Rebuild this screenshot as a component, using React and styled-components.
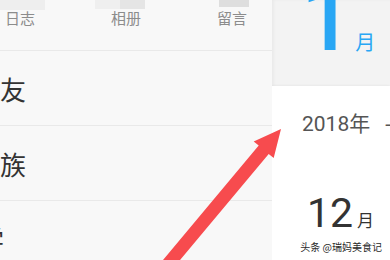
import React from 'react';
import styled, { createGlobalStyle } from 'styled-components';

const GlobalStyle = createGlobalStyle`
  html,
  body {
    margin: 0;
    padding: 0;
    background: #f8f8f8;
  }

  * {
    box-sizing: border-box;
  }
`;

const Screen = styled.div`
  position: relative;
  width: 390px;
  height: 260px;
  overflow: hidden;
  display: flex;
  background: #f8f8f8;
  font-family: Roboto, 'Noto Sans CJK SC', sans-serif;
`;

const LeftPane = styled.div`
  width: 272px;
  flex-shrink: 0;
  display: flex;
  flex-direction: column;
  overflow: hidden;
`;

const Nav = styled.div`
  display: grid;
  grid-template-columns: repeat(3, 106px);
  flex-shrink: 0;
  margin-left: -33px;
  height: 51px;
  border-bottom: 1px solid #e9e9e9;
`;

const NavItem = styled.div`
  display: flex;
  flex-direction: column;
  align-items: center;
`;

const Tile = styled.div`
  width: ${(props) => props.$w}px;
  height: 40px;
  margin-top: ${(props) => props.$visible - 40}px;
  margin-bottom: ${(props) => 10 - props.$visible}px;
  transform: translateX(${(props) => props.$shift}px);
  background: ${(props) => props.$bg};
`;

const NavLabel = styled.span`
  font-size: 15px;
  line-height: 19px;
  color: #8c8c8c;
`;

const ListRow = styled.div`
  height: 75px;
  flex-shrink: 0;
  display: flex;
  align-items: center;
  border-bottom: 1px solid #e9e9e9;
`;

const RowLabel = styled.span`
  margin-left: ${(props) => props.$shift}px;
  font-size: 26px;
  color: #333;
  white-space: nowrap;
`;

const RightPane = styled.div`
  flex: 1;
  display: flex;
  flex-direction: column;
  overflow: hidden;
`;

const MonthHero = styled.div`
  height: 86px;
  flex-shrink: 0;
  display: flex;
  align-items: baseline;
  padding-left: 29px;
  background: #f3f3f3;
  box-shadow: inset 2px 0 3px rgba(0, 0, 0, 0.04);
  color: #28a6f4;
`;

const HeroNumber = styled.span`
  font-size: 92px;
  font-weight: 500;
  line-height: 92px;
  margin-top: -27px;
`;

const HeroUnit = styled.span`
  font-size: 20px;
  margin-left: 2px;
`;

const PickerCard = styled.div`
  flex: 1;
  display: flex;
  flex-direction: column;
  background: #fff;
  box-shadow: -1px 0 3px rgba(0, 0, 0, 0.05);
  padding: 24px 0 0 30px;
  color: #333;
`;

const YearRow = styled.div`
  font-size: 21px;
  line-height: 28px;
  color: #555;
  white-space: nowrap;
`;

const YearDash = styled.span`
  margin-left: 15px;
`;

const MonthRow = styled.div`
  display: flex;
  align-items: baseline;
  margin-top: 53px;
  padding-left: 5px;
`;

const MonthNumber = styled.span`
  font-size: 41px;
  line-height: 44px;
`;

const MonthUnit = styled.span`
  font-size: 17px;
  margin-left: 4px;
`;

const Watermark = styled.span`
  position: absolute;
  right: 8px;
  bottom: 7px;
  font-family: 'Noto Sans CJK SC', sans-serif;
  font-size: 10px;
  line-height: 12px;
  color: #2a2a2a;
  text-shadow: 0 0 2px #fff, 0 0 2px #fff;
`;

const ArrowLayer = styled.svg`
  position: absolute;
  left: 0;
  top: 0;
  pointer-events: none;
`;

const navItems = [
  { label: '日志', w: 50, shift: 0, visible: 10, bg: '#eeeeee' },
  {
    label: '相册',
    w: 50,
    shift: -6,
    visible: 9,
    bg: 'linear-gradient(90deg, #efefef 50%, #e5e5e5 50%)',
  },
  { label: '留言', w: 30, shift: 2, visible: 7, bg: '#dedede' },
];

const rows = [
  { label: '好友', shift: -26 },
  { label: '家族', shift: -26 },
  { label: '同学', shift: -48 },
];

const App = () => {
  return (
    <>
      <GlobalStyle />
      <Screen>
        <LeftPane>
          <Nav>
            {navItems.map((item) => (
              <NavItem key={item.label}>
                <Tile
                  $w={item.w}
                  $shift={item.shift}
                  $visible={item.visible}
                  $bg={item.bg}
                />
                <NavLabel>{item.label}</NavLabel>
              </NavItem>
            ))}
          </Nav>
          {rows.map((row) => (
            <ListRow key={row.label}>
              <RowLabel $shift={row.shift}>{row.label}</RowLabel>
            </ListRow>
          ))}
        </LeftPane>

        <RightPane>
          <MonthHero>
            <HeroNumber>1</HeroNumber>
            <HeroUnit>月</HeroUnit>
          </MonthHero>
          <PickerCard>
            <YearRow>
              2018年<YearDash>-</YearDash>
            </YearRow>
            <MonthRow>
              <MonthNumber>12</MonthNumber>
              <MonthUnit>月</MonthUnit>
            </MonthRow>
          </PickerCard>
        </RightPane>

        <ArrowLayer width="390" height="260" viewBox="0 0 390 260">
          <polygon
            points="154,270.8 258.7,145.5 253.7,141.4 281,129 273.7,158 268.7,153.9 164,279.2"
            fill="#f74b4e"
          />
        </ArrowLayer>

        <Watermark>头条 @瑞妈美食记</Watermark>
      </Screen>
    </>
  );
};

export default App;
